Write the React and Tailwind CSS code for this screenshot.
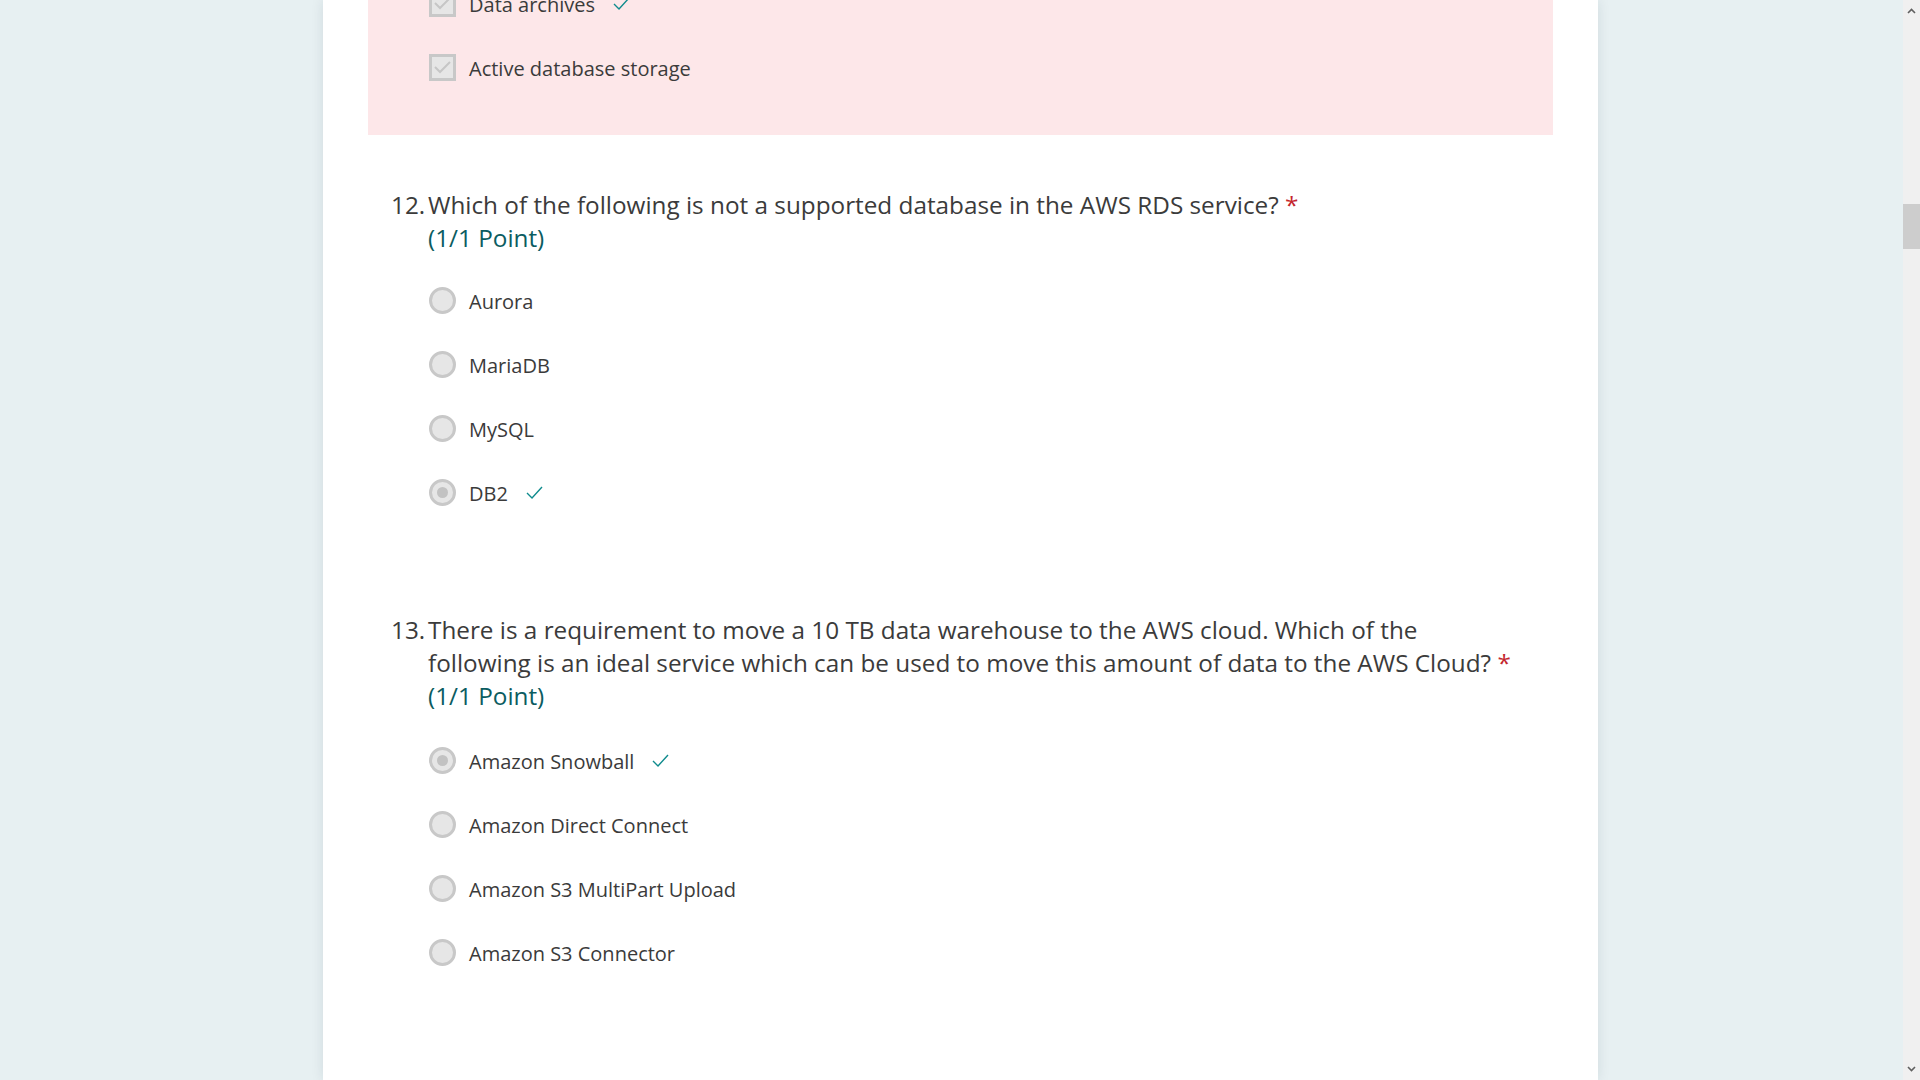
import React from "react";

const font = { fontFamily: '"Open Sans", "Noto Sans", Arial, sans-serif' };

function Check() {
  return (
    <svg width="17" height="13" viewBox="0 0 17 13" className="ml-[18px]">
      <path d="M1 7 L6 12 L16 1" fill="none" stroke="#0f8b8d" strokeWidth="1.4" />
    </svg>
  );
}

function Box() {
  return (
    <div className="w-[27px] h-[27px] border-[3px] border-[#c8c8c8] bg-[#e6e6e6] flex items-center justify-center shrink-0">
      <svg width="19" height="15" viewBox="0 0 19 15">
        <path d="M2 7 L7 12 L17 2" fill="none" stroke="#c6c6c6" strokeWidth="2" />
      </svg>
    </div>
  );
}

function Radio({ on }) {
  return (
    <div className="w-[27px] h-[27px] rounded-full border-[3px] border-[#c8c8c8] bg-[#e6e6e6] flex items-center justify-center shrink-0">
      {on && <div className="w-[11px] h-[11px] rounded-full bg-[#c2c2c2]" />}
    </div>
  );
}

function Option({ label, on, correct }) {
  return (
    <div className="h-[64px] flex items-center pl-[106px]">
      <Radio on={on} />
      <span className="ml-[13px] text-[20px] text-[#3b3b3b] leading-[27px] pt-[3px]">{label}</span>
      {correct && <Check />}
    </div>
  );
}

function Question({ num, lines }) {
  return (
    <div className="pl-[68px]">
      <div className="flex text-[24.3px] leading-[33px] text-[#3b3b3b]">
        <span className="w-[37px] shrink-0">{num}</span>
        <div className="w-[1120px]">
          {lines}
          <span className="text-[#c4262e]"> *</span>
          <div className="text-[#0b5c61]">(1/1 Point)</div>
        </div>
      </div>
    </div>
  );
}

export default function App() {
  return (
    <div className="w-[1920px] h-[1080px] flex overflow-hidden" style={font}>
      <div className="flex-1 bg-[#e7f0f2] overflow-hidden">
        <div className="ml-[323px] w-[1275px] h-[1080px] bg-white shadow-[0_0_12px_rgba(0,40,60,0.10)] overflow-hidden">
          <div className="mx-[45px] bg-[#fde7e9] -mt-[29px] pb-[36px]">
            <div className="h-[64px] flex items-center pl-[61px]">
              <Box />
              <span className="ml-[13px] text-[20px] text-[#3b3b3b] pt-[3px]">Data archives</span>
              <Check />
            </div>
            <div className="h-[64px] flex items-center pl-[61px]">
              <Box />
              <span className="ml-[13px] text-[20px] text-[#3b3b3b] pt-[3px]">Active database storage</span>
            </div>
          </div>
          <div className="mt-[53px]">
            <Question num="12." lines={<span>Which of the following is not a supported database in the AWS RDS service?</span>} />
            <div className="mt-[14px]">
              <Option label="Aurora" />
              <Option label="MariaDB" />
              <Option label="MySQL" />
              <Option label="DB2" on correct />
            </div>
          </div>
          <div className="mt-[89px]">
            <Question
              num="13."
              lines={
                <span>
                  There is a requirement to move a 10 TB data warehouse to the AWS cloud. Which of the
                  <br />
                  following is an ideal service which can be used to move this amount of data to the AWS Cloud?
                </span>
              }
            />
            <div className="mt-[16px]">
              <Option label="Amazon Snowball" on correct />
              <Option label="Amazon Direct Connect" />
              <Option label="Amazon S3 MultiPart Upload" />
              <Option label="Amazon S3 Connector" />
            </div>
          </div>
        </div>
      </div>
      <div className="w-[17px] h-full bg-[#f0f0f0] flex flex-col items-center">
        <svg width="9" height="6" viewBox="0 0 9 6" className="mt-[8px]">
          <path d="M1 5 L4.5 1.5 L8 5" fill="none" stroke="#606060" strokeWidth="1.6" />
        </svg>
        <div className="w-full h-[45px] bg-[#cdcdcd] mt-[190px]" />
        <div className="flex-1" />
        <svg width="9" height="6" viewBox="0 0 9 6" className="mb-[8px]">
          <path d="M1 1 L4.5 4.5 L8 1" fill="none" stroke="#606060" strokeWidth="1.6" />
        </svg>
      </div>
    </div>
  );
}
